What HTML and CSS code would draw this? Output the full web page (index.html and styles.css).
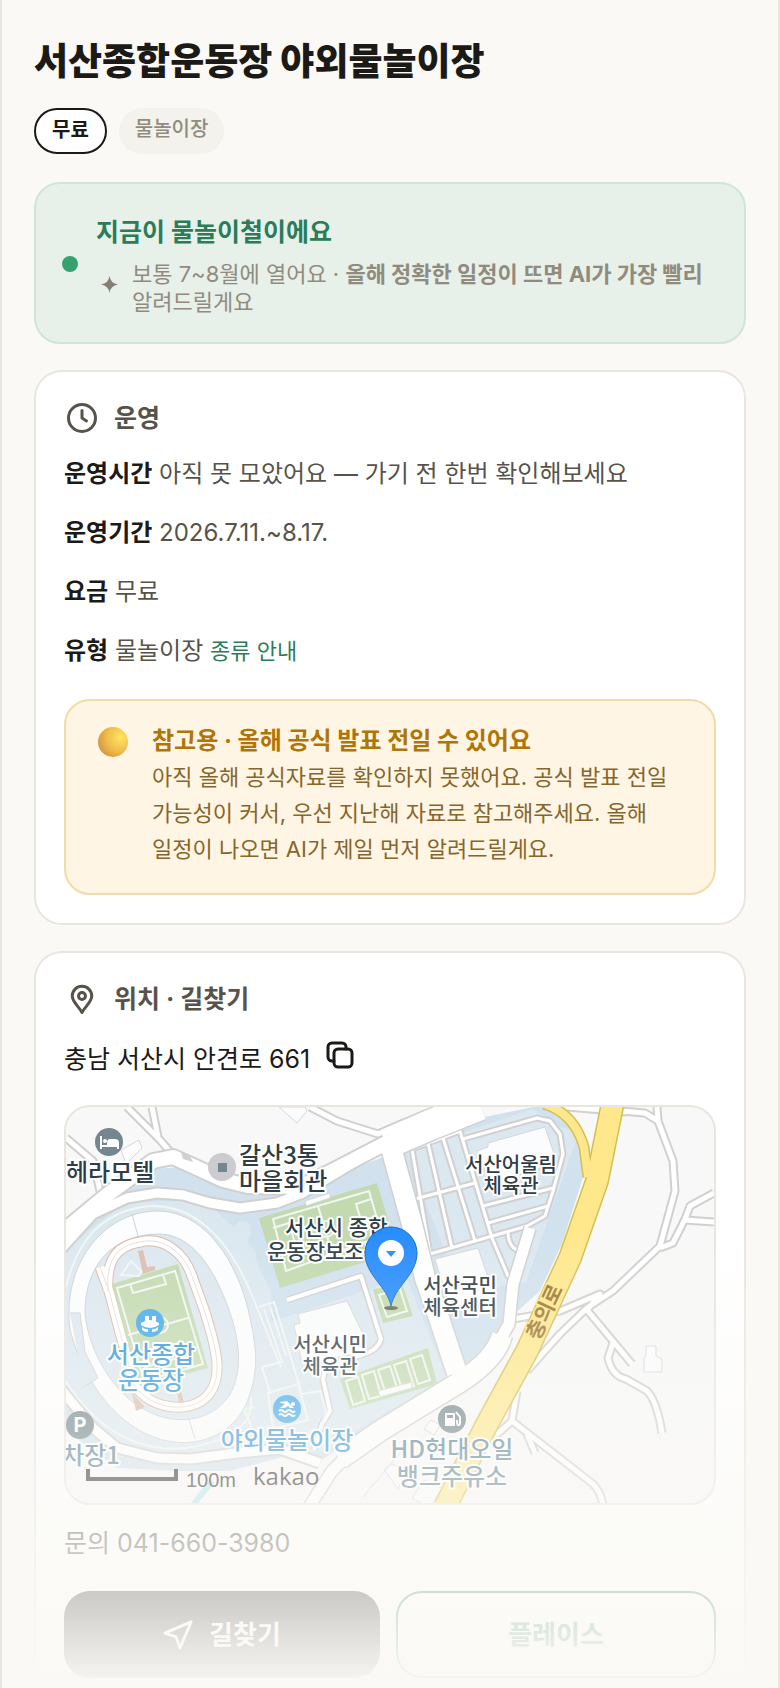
FILE: index.html
```html
<!DOCTYPE html>
<html lang="ko">
<head>
    <meta charset="UTF-8">
    <meta name="viewport" content="width=device-width, initial-scale=1.0">
    <title>서산종합운동장 야외물놀이장</title>
    <link rel="stylesheet" href="styles.css">
</head>
<body>
    <main class="page">
        <h1>서산종합운동장 야외물놀이장</h1>
        <div class="tags">
            <span class="tag tag-free">무료</span>
            <span class="tag">물놀이장</span>
        </div>

        <section class="status">
            <span class="status-dot"></span>
            <div class="status-body">
                <h2>지금이 물놀이철이에요</h2>
                <div class="status-desc">
                    <svg class="sparkle" viewBox="0 0 16 16"><path d="M8 0Q9 7 16 8Q9 9 8 16Q7 9 0 8Q7 7 8 0Z"/></svg>
                    <p>보통 7~8월에 열어요 · <b>올해 정확한 일정이 뜨면 AI가 가장 빨리</b> 알려드릴게요</p>
                </div>
            </div>
        </section>

        <section class="card">
            <h2 class="card-title">
                <svg class="icon" viewBox="0 0 24 24"><circle cx="12" cy="12" r="9"/><path d="M12 7v5l3 2"/></svg>
                운영
            </h2>
            <div class="rows">
                <p><b>운영시간</b> 아직 못 모았어요 — 가기 전 한번 확인해보세요</p>
                <p><b>운영기간</b> 2026.7.11.~8.17.</p>
                <p><b>요금</b> 무료</p>
                <p><b>유형</b> 물놀이장 <a href="#types">종류 안내</a></p>
            </div>
            <div class="notice">
                <span class="notice-dot"></span>
                <div>
                    <h3>참고용 · 올해 공식 발표 전일 수 있어요</h3>
                    <p>아직 올해 공식자료를 확인하지 못했어요. 공식 발표 전일 가능성이 커서, 우선 지난해 자료로 참고해주세요. 올해 일정이 나오면 AI가 제일 먼저 알려드릴게요.</p>
                </div>
            </div>
        </section>

        <section class="card card-open">
            <h2 class="card-title">
                <svg class="icon" viewBox="0 0 24 24"><path d="M12 21C10 17 5.500 14 5.500 10a6.500 6.500 0 0 1 13 0C18.500 14 14 17 12 21Z"/><circle cx="12" cy="10" r="2.300"/></svg>
                위치 · 길찾기
            </h2>
            <div class="address">
                <span>충남 서산시 안견로 661</span>
                <button class="copy" type="button" aria-label="주소 복사">
                    <svg viewBox="0 0 28 28"><rect x="8" y="8" width="18" height="18" rx="4"/><path d="M8 20H6a4 4 0 0 1-4-4V6a4 4 0 0 1 4-4h10a4 4 0 0 1 4 4v2"/></svg>
                </button>
            </div>

            <div class="map">
                <svg viewBox="0 0 648 396" role="img" aria-label="지도">
                    <!-- 부지 -->
                    <path class="site" d="M0 117L87 62L114 60L161 79L231 84L317 50L334 42L414 11L467 0H490L514 31L519 64L496 137L474 184L447 208L437 247L401 267L314 314L254 354L217 350L164 364L111 364L51 361L0 324Z"/>
                    <path class="site-light" d="M0 140L61 95L114 94L150 104L178 130L205 184L205 215L340 170L380 270L254 345L164 352L51 350L0 290ZM340 45L467 2L494 20L513 25L460 175L425 181L385 160ZM440 60L505 25"/>
                    <path class="site-light" d="M168 125c-2-13 18-15 17-1c0 8-7 10 1 17c11 10-2 20-11 9c-4-6-1-13-7-25Z"/>

                    <!-- 골목길 -->
                    <g class="casing"><path d="M61 0L94 33L107 48M86 0L92 30M0 31L27 54L34 84M244 0L271 14L312 27L340 15L385 0M501 0L560 5M555 4L579 6L592 14L607 54L609 84L594 139L547 184L521 201L494 227L461 264M591 0L592 14M594 141L607 136L619 112L624 99L648 86M619 113L648 115M447 212L494 204L534 187L521 203L566 257M547 236L542 251Q546 269 560 272L581 284Q591 294 596 326M451 284L446 314L430 328M446 314L527 377Q535 385 537 398M461 327L469 346"/></g>
                    <g class="fill"><path d="M61 0L94 33L107 48M86 0L92 30M0 31L27 54L34 84M244 0L271 14L312 27L340 15L385 0M501 0L560 5M555 4L579 6L592 14L607 54L609 84L594 139L547 184L521 201L494 227L461 264M591 0L592 14M594 141L607 136L619 112L624 99L648 86M619 113L648 115M447 212L494 204L534 187L521 203L566 257M547 236L542 251Q546 269 560 272L581 284Q591 294 596 326M451 284L446 314L430 328M446 314L527 377Q535 385 537 398M461 327L469 346"/></g>

                    <!-- 주차장 -->
                    <g class="casing lot"><path d="M364 147L346 42L394 24L426 131L442 169L453 167M362 36L386 141M377 31L409 134M349 92L409 76M364 147L461 119L479 109L487 84L497 47L494 27L484 14L471 11L397 32M417 99L487 81M422 116L482 99M442 124Q442 142 455 144"/></g>
                    <g class="fill lot"><path d="M364 147L346 42L394 24L426 131L442 169L453 167M362 36L386 141M377 31L409 134M349 92L409 76M364 147L461 119L479 109L487 84L497 47L494 27L484 14L471 11L397 32M417 99L487 81M422 116L482 99M442 124Q442 142 455 144"/></g>

                    <!-- 넓은 길 -->
                    <g class="casing">
                        <path class="w16" d="M-5 126L41 88L87 54L107 50L127 59L157 73L182 79L234 80L270 62L324 34"/>
                        <path class="w12" d="M-5 142L27 107L61 91L91 86L117 88L144 96L174 101L211 96L237 86L274 64L324 34"/>
                        <path class="w12" d="M-5 282L27 321L51 341L91 351L124 352L171 346L214 342L254 356"/>
                        <path class="w30" d="M320 37L364 18L414 -2"/>
                        <path class="w24" d="M324 37L346 117L359 171L371 205L391 266"/>
                        <path class="w14" d="M464 121L447 177L443 217L424 251"/>
                        <path class="w24" d="M436 228Q430 252 394 275L314 324L274 352"/>
                        <path class="w14" d="M280 350L266 364L243 400"/>
                        <path class="w8" d="M221 193L295 169L315 232Q312 243 298 247L260 260L257 272L264 304L256 317L248 343"/>
                    </g>
                    <g class="fill">
                        <path class="w16" d="M-5 126L41 88L87 54L107 50L127 59L157 73L182 79L234 80L270 62L324 34"/>
                        <path class="w12" d="M-5 142L27 107L61 91L91 86L117 88L144 96L174 101L211 96L237 86L274 64L324 34"/>
                        <path class="w12" d="M-5 282L27 321L51 341L91 351L124 352L171 346L214 342L254 356"/>
                        <path class="w30" d="M320 37L364 18L414 -2"/>
                        <path class="w24" d="M324 37L346 117L359 171L371 205L391 266"/>
                        <path class="w14" d="M464 121L447 177L443 217L424 251"/>
                        <path class="w24" d="M436 228Q430 252 394 275L314 324L274 352"/>
                        <path class="w14" d="M280 350L266 364L243 400"/>
                        <path class="w8" d="M221 193L295 169L315 232Q312 243 298 247L260 260L257 272L264 304L256 317L248 343"/>
                    </g>
                    <path class="island" d="M115 45l9 4l3 6l-10-3z"/>
                    <path class="creek" d="M127 398L146 374"/>
                    <path class="court-line" d="M0 180Q18 104 85 99Q150 98 188 193L215 260M0 275Q48 348 120 341Q190 330 185 290M193 200l15-5l28 92l18-3l6 20l-8 30M198 202l18 53l-20 5l8 26M204 199l16 50M202 286l30-9l10 36l-35 9ZM188 300l-10 2l8 20"/>

                    <!-- 종합운동장 -->
                    <path class="stand" d="M91 104C135 104 165 145 180 194C190 235 195 260 181 295C165 334 120 343 88 330C45 315 14 265 4 222C-4 160 35 105 91 104Z"/>
                    <path class="bowl" d="M94 127C126 128 147 161 160 195C174 230 178 265 163 289C145 315 110 319 81 304C46 287 21 240 19 205C19 160 45 127 94 127ZM66 107L72 129M4 206L14 206L19 245L32 271L18 280M123 312L129 332"/>
                    <path class="track-edge" d="M34 160L43 184L67 274C77 301 125 310 143 287C160 266 146 230 139 205L126 169C119 148 99 129 74 135C49 139 40 155 42 184"/>
                    <path class="track" d="M34 160L43 184L67 274C77 301 125 310 143 287C160 266 146 230 139 205L126 169C119 148 99 129 74 135C49 139 40 155 42 184"/>
                    <path class="track-line" d="M34 160L43 184L67 274C77 301 125 310 143 287C160 266 146 230 139 205L126 169C119 148 99 129 74 135C49 139 40 155 42 184"/>
                    <path class="ramp" d="M72 144l5-1l4 17l8-1l0 4l-12 4ZM66 286l13 14l-9 4ZM111 285l4-1l3 11l-5 1Z"/>
                    <path class="field" d="M46 177L112 157L142 261L74 279Z"/>
                    <path class="court-line" d="M51 181L109 164L137 257L78 274ZM62 228L122 211M64 177l3 9l33-9l-3-9M82 269l-3-9l33-9l3 9M55 168l10-14l10 10l-2 5z"/>
                    <circle class="court-line" cx="94" cy="218" r="8"/>

                    <!-- 보조구장과 코트 -->
                    <path class="field" d="M193 111L311 76L332 145L214 181ZM307 182L337 179L347 209L317 216ZM274 272L362 241L371 277L284 302Z"/>
                    <path class="court-line" d="M207 112L303 84L316 129L220 164ZM252 99L266 146M207 121l16-5l7 24l-15 5M305 92l-15 5l6 20l16-5M313 188l21-6l7 22l-20 6ZM280 274l12-4l7 24l-12 4ZM296 268l12-4l7 25l-12 3ZM312 263l12-4l8 25l-12 3ZM328 258l12-4l8 25l-12 3ZM344 252l12-4l8 25l-12 4Z"/>
                    <circle class="court-line" cx="260" cy="122" r="8"/>

                    <!-- 건물 -->
                    <path class="building" d="M232 207L281 194L299 231L302 245L236 256L228 218L234 216ZM411 44L422 40L422 36L479 20L491 56L424 76ZM369 152L412 141L429 191L384 201ZM239 94l25-8v5l-24 8ZM213 0h26l2 4l-10 12ZM580 239h10v10l6 3v13h-18v-14l2-2ZM55 43l18-10l3 8l-16 16ZM365 313l9 5l-6 10l-10-6ZM312 284l34-9v6l-32 9ZM318 362l8-5l14 7l-8 18ZM346 391l12-18l18 8l-12 20ZM297 390l44-52"/>

                    <!-- 큰길 -->
                    <g class="main-casing"><path class="branch" d="M478 -3Q508 6 518 40L522 70"/><path d="M547 -5L531 74L504 151L461 244L421 317L379 400"/></g>
                    <g class="main-road"><path class="branch" d="M478 -3Q508 6 518 40L522 70"/><path d="M547 -5L531 74L504 151L461 244L421 317L379 400"/></g>

                    <!-- 장소 아이콘 -->
                    <circle class="poi" cx="43" cy="35" r="14"/>
                    <path class="poi-shape" d="M34 29h2v9h5v-2q0-4 3-4h5q4 0 4 4v6h-2v-2h-15v2h-2z"/>
                    <circle class="poi-shape" cx="39" cy="34" r="2"/>
                    <circle class="poi-hall" cx="156" cy="60" r="14"/>
                    <path class="poi" d="M152 56h9v9h-9z"/>
                    <circle class="poi-blue" cx="84" cy="216" r="14"/>
                    <path class="poi-shape" d="M79 209h4v5h-4zM86 209h4v5h-4zM75 216q9-6 18 0v2q-9 6-18 0zM76 220q4 3 6 2v3q-4 0-6-2zM92 220q-4 3-6 2v3q4 0 6-2z"/>
                    <circle class="poi-blue" cx="221" cy="302" r="14"/>
                    <path class="poi-shape" d="M214 295l7-1l7 7h-4l-2-2l-3 2h-5l5-4l-4-1z"/>
                    <circle class="poi-shape" cx="227" cy="297" r="2"/>
                    <path class="poi-line" d="M213 304q2-2 4 0t4 0t4 0t4 0M213 308q2-2 4 0t4 0t4 0t4 0"/>
                    <circle class="poi" cx="14" cy="318" r="14"/>
                    <text class="parking" x="14" y="325">P</text>
                    <circle class="poi" cx="386" cy="312" r="14"/>
                    <path class="poi-shape" d="M379 306h10v13h-10z"/>
                    <path class="poi" d="M381 308h6v3h-6z"/>
                    <path class="poi-line" d="M390 305l4 5v7q-2 3-3-1v-3"/>

                    <!-- 지명 -->
                    <g class="label large">
                        <text x="0" y="74">헤라모텔</text>
                        <text x="173" y="57">갈산3통</text>
                        <text x="173" y="83">마을회관</text>
                    </g>
                    <g class="label medium">
                        <text x="219" y="128">서산시 종합</text>
                        <text x="201" y="152">운동장보조구장</text>
                    </g>
                    <g class="label small">
                        <text x="445" y="65">서산어울림</text><text x="445" y="86">체육관</text>
                        <text x="394" y="186">서산국민</text><text x="394" y="208">체육센터</text>
                        <text x="264" y="245">서산시민</text><text x="264" y="267">체육관</text>
                    </g>
                    <g class="label large middle blue">
                        <text x="85" y="256">서산종합</text><text x="85" y="282">운동장</text>
                        <text x="221" y="342">야외물놀이장</text>
                    </g>
                    <g class="label large middle slate">
                        <text x="386" y="351">HD현대오일</text><text x="386" y="378">뱅크주유소</text>
                        <text class="end" x="54" y="357">주차장1</text>
                    </g>
                    <text class="road-name" transform="translate(485 208) rotate(-65)">충의로</text>

                    <path class="scale" d="M22 362V372H110V362"/>
                    <text class="scale-text" x="120" y="380">100m</text>
                    <text class="kakao" x="187" y="378">kakao</text>

                    <!-- 마커 -->
                    <ellipse class="shadow" cx="325" cy="201" rx="7" ry="2"/>
                    <path class="marker" d="M325 199C321 179 299 168 299 146A26 26 0 0 1 351 146C351 168 329 179 325 199Z"/>
                    <circle class="marker-hole" cx="325" cy="146" r="13"/>
                    <path class="marker-arrow" d="M320 144h10l-5 6z"/>
                </svg>
            </div>

            <p class="contact">문의 041-660-3980</p>
            <div class="actions">
                <button class="btn btn-dark" type="button">
                    <svg viewBox="0 0 32 32"><path d="M30 2L2 14l12 4l4 12Z"/></svg>
                    길찾기
                </button>
                <button class="btn btn-line" type="button">플레이스</button>
            </div>
        </section>
        <div class="fade"></div>
    </main>
</body>
</html>
```
FILE: styles.css
```css
* {
    box-sizing: border-box;
}

body {
    margin: 0;
    background-color: #faf9f5;
    color: #1c1a16;
    font-family: Inter, "Noto Sans CJK KR", sans-serif;
    word-break: keep-all;
}

h1, h2, h3, p {
    margin: 0;
}

.page {
    position: relative;
    display: flow-root;
    min-height: 100vh;
    padding: 0 32px;
    border: solid #e8e6df;
    border-width: 0 2px;
}

h1 {
    margin-top: 36px;
    font-size: 37px;
    font-weight: 800;
    line-height: 52px;
}

/* 태그 */
.tags {
    display: flex;
    gap: 12px;
    margin-top: 20px;
}

.tag {
    height: 46px;
    padding: 0 16px;
    border-radius: 23px;
    background-color: #f3f2ed;
    color: #918b7e;
    font-size: 20px;
    font-weight: 500;
    line-height: 42px;
}

.tag-free {
    border: 2px solid #1c1a16;
    background-color: #fff;
    color: #1c1a16;
    font-weight: 700;
    line-height: 40px;
}

/* 시즌 안내 */
.status {
    display: flex;
    align-items: center;
    gap: 18px;
    margin-top: 28px;
    padding: 28px 26px 26px;
    border: 2px solid #cfe5d8;
    border-radius: 26px;
    background-color: #e8f0ea;
}

.status-dot {
    flex: none;
    width: 16px;
    height: 16px;
    border-radius: 50%;
    background-color: #35a36d;
}

.status h2 {
    color: #2a7d58;
    font-size: 25px;
    line-height: 40px;
}

.status-desc {
    display: flex;
    align-items: flex-start;
    gap: 14px;
    margin-top: 8px;
    padding-left: 5px;
    color: #918b7e;
    font-size: 22px;
    line-height: 28px;
}

.sparkle {
    flex: none;
    width: 17px;
    height: 17px;
    margin-top: 16px;
    fill: #857f73;
}

/* 카드 */
.card {
    margin-top: 26px;
    padding: 28px;
    border: 2px solid #e8e6df;
    border-radius: 28px;
    background-color: #fff;
}

.card-open {
    padding-bottom: 11px;
    border-bottom: 0;
    border-radius: 28px 28px 0 0;
}

.card-title {
    display: flex;
    align-items: center;
    gap: 14px;
    color: #57534a;
    font-size: 25px;
    line-height: 36px;
}

.icon {
    width: 36px;
    height: 36px;
    fill: none;
    stroke: #57534a;
    stroke-width: 2;
    stroke-linecap: round;
    stroke-linejoin: round;
}

.rows {
    display: grid;
    gap: 20px;
    margin-top: 18px;
    color: #57534a;
    font-size: 24px;
    line-height: 39px;
}

.rows b {
    color: #1c1a16;
}

.rows a {
    color: #2a7d58;
    font-size: 22px;
    text-decoration: none;
}

.notice {
    display: flex;
    gap: 24px;
    margin-top: 28px;
    padding: 22px 32px 26px;
    border: 2px solid #f0dca6;
    border-radius: 26px;
    background-color: #fff5e4;
    color: #86662a;
    font-size: 22px;
    line-height: 36px;
}

.notice h3 {
    color: #af7607;
    font-size: 24px;
    line-height: 36px;
}

.notice-dot {
    flex: none;
    width: 30px;
    height: 30px;
    margin-top: 4px;
    border-radius: 50%;
    background: radial-gradient(circle at 75% 35%, #ffe55f, #f0be4c 45%, #d89b42 75%, #cb7d62);
}

.address {
    display: flex;
    align-items: center;
    gap: 16px;
    margin-top: 22px;
    font-size: 25px;
    line-height: 40px;
}

.copy {
    width: 28px;
    height: 28px;
    margin-bottom: 8px;
    padding: 0;
    border: 0;
    background: none;
    cursor: pointer;
}

.copy svg {
    display: block;
    fill: none;
    stroke: #1c1a16;
    stroke-width: 3;
    stroke-linecap: round;
}

/* 지도 */
.map {
    margin-top: 26px;
    overflow: hidden;
    border: 2px solid #e8e6df;
    border-radius: 26px;
    background-color: #f8f8f8;
}

.map svg {
    display: block;
    width: 100%;
}

.site { fill: #d1e2ee; }
.site-light { fill: #dce8f0; }

.casing path,
.fill path {
    fill: none;
    stroke-linejoin: round;
}

.casing path { stroke: #d0d0d0; stroke-width: 9; }
.fill path { stroke: #fff; stroke-width: 5; }
.casing.lot path { stroke-width: 7; }
.fill.lot path { stroke-width: 3; }
.casing .w8 { stroke-width: 7; }
.fill .w8 { stroke-width: 4; }
.casing .w12 { stroke-width: 13; }
.fill .w12 { stroke-width: 9; }
.casing .w14 { stroke-width: 14; }
.fill .w14 { stroke-width: 11; }
.casing .w16 { stroke-width: 18; }
.fill .w16 { stroke-width: 14; }
.casing .w24 { stroke-width: 23; }
.fill .w24 { stroke-width: 20; }
.casing .w30 { stroke-width: 33; }
.fill .w30 { stroke-width: 30; }

.island { fill: #d0d0d0; }
.creek { stroke: #b5e2ee; stroke-width: 6; }
.stand { fill: #fcfdfe; stroke: #cfd1d3; }
.bowl { fill: #dce8f0; stroke: #cfd1d3; }
.track-edge { fill: none; stroke: #d9b9aa; stroke-width: 11; }
.track { fill: none; stroke: #fff; stroke-width: 9; }
.track-line { fill: none; stroke: #e8ddd8; stroke-width: 1; }
.ramp { fill: #dcbfb0; }
.field { fill: #c3dab0; }
.court-line { fill: none; stroke: #f2f6f3; stroke-width: 2; }
.building { fill: #fbfcfd; stroke: #d5d7d9; }

.main-casing path,
.main-road path {
    fill: none;
    stroke-linejoin: round;
}

.main-casing path { stroke: #d5bf50; stroke-width: 24; }
.main-road path { stroke: #ffe88c; stroke-width: 21; }
.main-casing .branch { stroke-width: 11; }
.main-road .branch { stroke-width: 8; }

.poi { fill: #74868f; }
.poi-hall { fill: #cbcbd0; }
.poi-blue { fill: #42a9ea; }
.poi-shape { fill: #fff; }
.poi-line { fill: none; stroke: #fff; stroke-width: 2; }

.label {
    fill: #2f3d46;
    stroke: #fff;
    stroke-width: 4px;
    stroke-linejoin: round;
    paint-order: stroke;
    font-family: "Noto Sans CJK KR", sans-serif;
    font-weight: 500;
}

.large { font-size: 24px; }
.medium { font-size: 21px; }
.small { font-size: 20px; text-anchor: middle; }
.middle { text-anchor: middle; }
.blue { fill: #3295d6; }
.slate { fill: #557f94; }
.end { text-anchor: end; }

.parking {
    fill: #fff;
    font-size: 20px;
    font-weight: 700;
    text-anchor: middle;
}

.road-name {
    fill: #9d7830;
    stroke: #ffe88c;
    stroke-width: 3px;
    paint-order: stroke;
    font-size: 21px;
    font-weight: 700;
    text-anchor: middle;
}

.scale {
    fill: none;
    stroke: #222;
    stroke-width: 4;
}

.scale-text {
    fill: #222;
    font-family: "Liberation Sans", sans-serif;
    font-size: 20px;
}

.kakao {
    fill: #222;
    font-family: "Open Sans", sans-serif;
    font-size: 24px;
    font-weight: 500;
}

.shadow { fill: rgba(0, 0, 0, 0.5); }
.marker { fill: #288dff; stroke: #1768ce; }
.marker-hole { fill: #fff; }
.marker-arrow { fill: #288dff; }

.contact {
    margin-top: 18px;
    color: #57534a;
    font-size: 25px;
    line-height: 40px;
}

/* 버튼 */
.actions {
    display: flex;
    gap: 16px;
    margin-top: 28px;
}

.btn {
    display: flex;
    flex: 1;
    box-sizing: content-box;
    align-items: center;
    justify-content: center;
    gap: 16px;
    padding: 0;
    border: 0;
    border-radius: 26px;
    font-family: inherit;
    font-size: 26px;
    font-weight: 700;
    line-height: 83px;
    cursor: pointer;
}

.btn svg {
    width: 30px;
    height: 30px;
    fill: none;
    stroke: #fff;
    stroke-width: 3;
    stroke-linejoin: round;
}

.btn-dark {
    background-color: #1c1a16;
    color: #fff;
}

.btn-line {
    border: 2px solid #2a7d58;
    background-color: #fff;
    color: #2a7d58;
}

/* 아래쪽 흐림 */
.fade {
    position: absolute;
    right: 0;
    bottom: 0;
    left: 0;
    height: 458px;
    background: linear-gradient(rgba(250, 249, 245, 0), #faf9f5);
    pointer-events: none;
}
```
